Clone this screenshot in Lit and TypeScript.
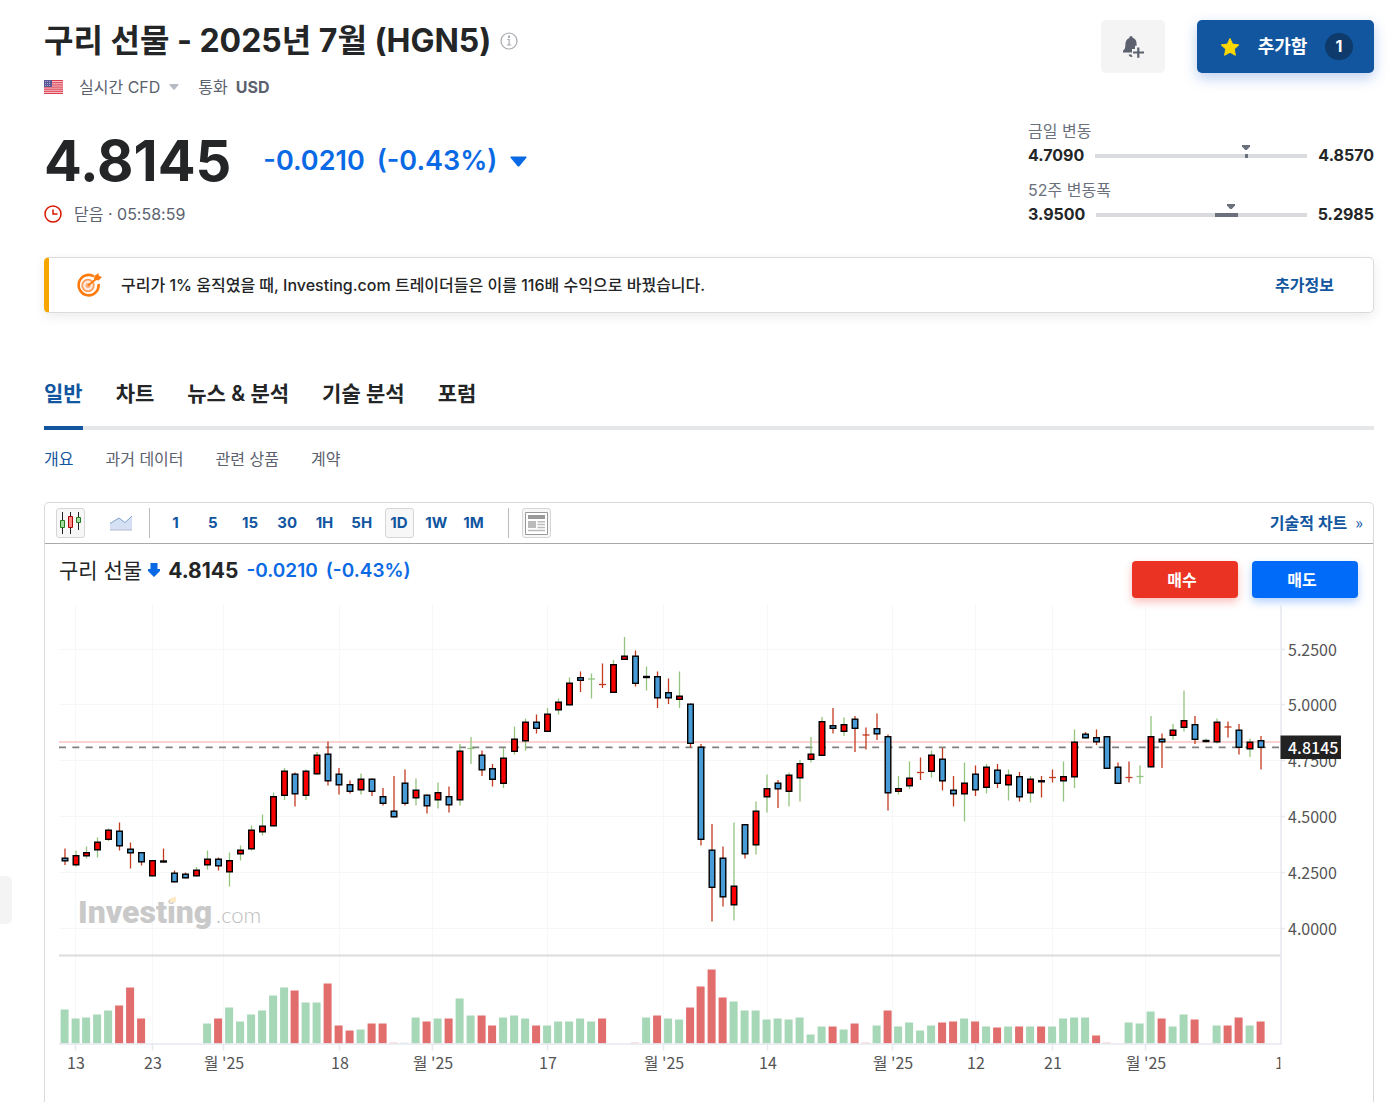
import { LitElement, html, svg, css } from "lit";
import { customElement, state } from "lit/decorators.js";

type Kind = "u" | "d" | "ku" | "kd" | "cu" | "cd";
// kind, high, body top, body bottom, low (plot coordinates)
// u = rising, d = falling, k* = flat black body, c* = cross
const CANDLES: [Kind, number, number, number, number][] = [
  ["d", 848.5, 857.5, 861.5, 865], ["u", 850.5, 855, 865.5, 866.5], ["u", 846.5, 852, 856.5, 858.5],
  ["u", 837.5, 841.5, 850.5, 857.5], ["u", 828.5, 829.5, 840, 841], ["d", 822.5, 830.5, 846.5, 850.5],
  ["d", 842.5, 848.5, 853.5, 868.5], ["d", 852, 852, 862.5, 865.5], ["u", 860, 860, 876.5, 876.5],
  ["kd", 848.5, 860.5, 862.5, 862.5], ["d", 870.5, 872.5, 882.5, 882.5], ["d", 872.5, 873.5, 878.5, 878.5],
  ["u", 867, 869.5, 876.5, 876.5], ["u", 850.5, 858.5, 865.5, 869.5], ["d", 857.5, 858.5, 866.5, 870.5],
  ["u", 852.5, 860, 872.5, 886.5], ["u", 845.5, 849.5, 854.5, 860.5], ["u", 825.5, 829.5, 849.5, 850.5],
  ["u", 814.5, 825.5, 832.5, 835.5], ["u", 792.5, 796, 826.5, 826.5], ["u", 768, 770.5, 796, 800],
  ["d", 772.5, 773.5, 794.5, 806.5], ["u", 769.5, 770.5, 796, 800], ["u", 752, 754.5, 774.5, 774.5],
  ["d", 741.5, 753.5, 781.5, 785.5], ["d", 768, 773.5, 785.5, 794.5], ["d", 780.5, 784, 792, 793.5],
  ["u", 773.5, 778.5, 790.5, 794.5], ["d", 778.5, 778.5, 792, 796], ["d", 788, 796, 804, 805.5],
  ["d", 776, 810.5, 817.5, 817.5], ["d", 769.5, 782.5, 804, 805.5], ["u", 778.5, 789.5, 798.5, 805.5],
  ["d", 794.5, 794.5, 806.5, 813.5], ["u", 782.5, 792, 800.5, 808.5], ["d", 786.5, 796, 805.5, 812.5],
  ["u", 744, 750.5, 800.5, 805.5], ["cu", 737, 748.5, 748.5, 764], ["d", 750.5, 754.5, 770.5, 776],
  ["d", 764, 768, 780, 786.5], ["u", 748, 757.5, 784, 788], ["u", 726.5, 738.5, 752, 754.5],
  ["u", 718.5, 721.5, 741.5, 750.5], ["d", 714.5, 721.5, 729, 733.5], ["u", 708, 713.5, 732, 732],
  ["u", 698.5, 701.5, 710.5, 714.5], ["u", 677.5, 682.5, 705.5, 705.5], ["d", 671.5, 677, 681, 692],
  ["cu", 673.5, 679, 679, 698.5], ["cd", 663.5, 684.5, 684.5, 688], ["u", 660, 664, 693, 693],
  ["u", 637, 655.5, 660, 660], ["d", 650.5, 655.5, 684, 686.5], ["ku", 666.5, 676, 678, 690.5],
  ["d", 671.5, 676, 698.5, 708], ["d", 678.5, 692, 698.5, 704], ["u", 671.5, 695.5, 700, 708],
  ["d", 703.5, 703.5, 744, 747.5], ["d", 744, 746.5, 840, 845.5], ["d", 824, 849.5, 888, 921.5],
  ["d", 846.5, 857.5, 897.5, 906.5], ["u", 822.5, 885.5, 905.5, 920.5], ["d", 824, 824, 854.5, 858.5],
  ["u", 801.5, 810.5, 845.5, 854.5], ["u", 774.5, 788, 797.5, 812.5], ["d", 780, 782.5, 789.5, 808],
  ["u", 772.5, 774.5, 792, 806.5], ["u", 760, 763, 778.5, 801.5], ["u", 737, 753.5, 760, 762.5],
  ["u", 717, 721, 756, 756], ["d", 708, 725, 729, 733.5], ["u", 717.5, 724, 732, 736],
  ["d", 716, 718.5, 729, 752], ["cd", 727.5, 735, 735, 749.5], ["d", 713.5, 728, 734.5, 740],
  ["d", 734.5, 736, 793.5, 810.5], ["u", 776, 788, 792, 794.5], ["u", 761.5, 777.5, 786.5, 789],
  ["cd", 757.5, 772.5, 772.5, 780], ["u", 750.5, 754.5, 772, 777.5], ["d", 748, 758.5, 781.5, 790.5],
  ["d", 776, 789.5, 794.5, 806.5], ["u", 762.5, 782.5, 794.5, 821.5], ["d", 765.5, 773.5, 790.5, 796],
  ["u", 764, 766.5, 788, 793.5], ["d", 764, 769.5, 784, 788], ["u", 769.5, 774.5, 785.5, 800.5],
  ["d", 772, 776, 797.5, 801.5], ["u", 776, 778.5, 793.5, 802.5], ["kd", 776, 780, 782.5, 797.5],
  ["cd", 769.5, 777.5, 777.5, 782.5], ["u", 761.5, 776, 781.5, 801.5], ["u", 729.5, 741.5, 777.5, 788],
  ["d", 732, 733.5, 738.5, 738.5], ["d", 729.5, 737, 742.5, 745], ["d", 736, 736, 769, 769],
  ["d", 762.5, 766.5, 784, 784], ["cd", 761.5, 777.5, 777.5, 782.5], ["cu", 765.5, 776.5, 776.5, 784],
  ["u", 716, 736, 767.5, 767.5], ["d", 733.5, 738.5, 742.5, 768], ["u", 724, 729.5, 736, 739.5],
  ["u", 690.5, 720, 728, 731.5], ["d", 716, 724, 740, 744], ["ku", 738.5, 739.5, 742.5, 742.5],
  ["u", 718.5, 721.5, 742.5, 743.5], ["cd", 721.5, 727, 727, 737.5], ["d", 724, 729.5, 748, 754.5],
  ["u", 738.5, 741.5, 749.5, 757], ["d", 736, 740, 748, 769.5],
];

// Positive = buying volume, negative = selling volume, 0 = none
const VOLUMES: number[] = [
  34, 25, 26, 29, 33, -38, -56, -25, 0, 0, 0, 0, 0, 20, -25, 36, 22, 29, 33, 48, 56, -53, 41, 41, -60,
  -18, -13, 14, -20, -20, -1, 1, 26, -22, 25, -25, 45, 28, -28, -18, 26, 28, 25, -18, 18, 22, 22, 25, 22, -25,
  0, 0, -1, 26, -28, 25, 24, -36, -57, -74, -46, 42, 33, 33, 24, 25, 24, 26, 9, 17, -17, 14, -20, -1, 18,
  -33, 17, 21, 13, 18, -21, -22, 25, -22, 17, -16, 17, -17, 17, -17, 17, 25, 26, 26, -8, -1, 0, 21, 20, 32,
  -25, 17, 29, -24, 0, 18, -18, -26, 18, -22,
];

const X_LABELS: [number, string][] = [
  [76, "13"], [153, "23"], [224, "월 '25"], [340, "18"], [433, "월 '25"], [548, "17"],
  [664, "월 '25"], [768, "14"], [893, "월 '25"], [976, "12"], [1053, "21"], [1146, "월 '25"],
];
const Y_LABELS: [number, string][] = [
  [650, "5.2500"], [705, "5.0000"], [761, "4.7500"], [817, "4.5000"], [873, "4.2500"], [929, "4.0000"],
];
const slotX = (i: number) => Math.round((64.8 + i * 10.973) * 2) / 2;

@customElement("price-chart")
export class PriceChart extends LitElement {
  static styles = css`
    :host { display: block; }
    .plot { display: block; width: 100%; height: auto; }
    .axis { font: 16px "Noto Sans CJK KR", "Noto Sans", sans-serif; fill: #555; }
    .tag { font: 500 16px "Noto Sans CJK KR", "Noto Sans", sans-serif; fill: #fff; }
    .brand { font: 900 32px Roboto, sans-serif; fill: #c9c9c9; }
    .brand-tld { font: 300 22px Lato, sans-serif; fill: #bdbdbd; }
    .crisp { shape-rendering: crispEdges; }
  `;

  private candle([kind, high, top, bottom, low]: [Kind, number, number, number, number], i: number) {
    const x = slotX(i);
    const rising = kind.endsWith("u");
    const wick = rising ? "#93c47d" : "#c23b1e";
    const wickLine = svg`<path d="M${x} ${high}V${low}" stroke=${wick} stroke-width="1.3"/>`;
    if (kind[0] === "c") return svg`${wickLine}<path d="M${x - 3.5} ${top}h7" stroke=${wick} stroke-width="1.3"/>`;
    if (kind[0] === "k") return svg`${wickLine}<path d="M${x - 3.5} ${(top + bottom) / 2}h7" stroke="#000" stroke-width="2.4"/>`;
    return svg`${wickLine}<rect x=${x - 2.8} y=${top + 0.7} width="5.6" height=${bottom - top - 1.4}
      fill=${rising ? "#f90000" : "#479bd6"} stroke="#000" stroke-width="1.4"/>`;
  }

  render() {
    return html`<svg class="plot" viewBox="45 604 1328 498" role="img" aria-label="구리 선물">
      <g class="crisp" stroke="#f6f7f8">
        ${X_LABELS.map(([x]) => svg`<path d="M${x - 0.5} 605V1044"/>`)}
        ${Y_LABELS.map(([y]) => svg`<path d="M59 ${y - 0.5}H1280"/>`)}
      </g>
      <text class="brand" x="78" y="923">Investing</text>
      <path d="M170 898.500l6-2v5.500l-6 1z" fill="#fdebc8"/>
      <text class="brand-tld" x="216" y="923">.com</text>
      <path d="M59 742H1281" stroke="#fbc4c4" stroke-width="1.6"/>
      <path d="M59 747.3H1281" stroke="#808080" stroke-width="1.8" stroke-dasharray="7 6.33"/>
      ${CANDLES.map((c, i) => this.candle(c, i))}
      ${VOLUMES.map((v, i) => v === 0 ? null : svg`<rect x=${slotX(i) - 4.4} y=${1043.5 - Math.abs(v)} width="8"
        height=${Math.abs(v)} fill=${v > 0 ? "#a6d7b6" : "#e26d6d"} fill-opacity=${Math.abs(v) === 1 ? 0.4 : 1}/>`)}
      <path d="M59 955.5H1281" stroke="#dcdcdc" stroke-width="2"/>
      <g stroke="#e6e9ef" stroke-width="1.6" fill="none">
        <path d="M59 1044H1281V605"/>
        ${X_LABELS.map(([x]) => svg`<path d="M${x - 0.5} 1044v6.5"/>`)}
        ${Y_LABELS.map(([y]) => svg`<path d="M1281 ${y - 0.5}h4"/>`)}
      </g>
      ${X_LABELS.map(([x, t]) => svg`<text class="axis" x=${x} y="1069" text-anchor="middle">${t}</text>`)}
      ${Y_LABELS.map(([y, t]) => svg`<text class="axis" x="1288" y=${y + 6}>${t}</text>`)}
      <clipPath id="edge"><rect x="1270" y="1050" width="10.5" height="30"/></clipPath>
      <text class="axis" x="1275" y="1069" clip-path="url(#edge)">1</text>
      <rect x="1280.5" y="735.5" width="60.5" height="23.5" fill="#222"/>
      <text class="tag" x="1288" y="754">4.8145</text>
    </svg>`;
  }
}

@customElement("day-range")
export class DayRange extends LitElement {
  static properties = {
    label: {}, low: {}, high: {},
    from: { type: Number }, to: { type: Number }, at: { type: Number },
  };
  declare label: string;
  declare low: string;
  declare high: string;
  declare from: number;
  declare to: number;
  declare at: number;

  static styles = css`
    :host { display: block; }
    .label { font-size: 16px; line-height: 22px; color: #6a707c; }
    .line { display: flex; align-items: center; gap: 11px; padding-top: 1px; font-size: 16px; font-weight: 700; line-height: 24px; color: #232526; }
    .track { position: relative; flex: 1; height: 4px; margin-top: 2px; background: #d9dbdf; }
    .span { position: absolute; top: 0; height: 4px; background: #6a707c; }
    .mark { position: absolute; bottom: 8px; width: 8px; height: 5px; transform: translateX(-50%); fill: #6a707c; }
  `;

  render() {
    return html`<div class="label">${this.label}</div>
      <div class="line">
        <span>${this.low}</span>
        <div class="track">
          <div class="span" style="left:${this.from}%;width:${this.to - this.from}%"></div>
          <svg class="mark" style="left:${this.at}%" viewBox="0 0 8 5"><path d="M0 0h8v1.5L4.8 5H3.2L0 1.5z"/></svg>
        </div>
        <span>${this.high}</span>
      </div>`;
  }
}

@customElement("app-root")
export class AppRoot extends LitElement {
  @state() private interval = "1D";

  static styles = css`
    :host {
      display: block; position: relative; box-sizing: border-box; padding: 20px 23px 0 44px;
      overflow: hidden; background: #fff; color: #232526;
      font-family: Inter, "Noto Sans CJK KR", sans-serif;
    }
    button { font-family: inherit; border: 0; padding: 0; cursor: pointer; }
    a { color: inherit; text-decoration: none; }
    svg { display: block; flex: none; }

    .top { display: flex; justify-content: space-between; align-items: flex-start; }
    .title { display: flex; align-items: center; gap: 9px; }
    h1 { margin: 0; font-size: 32px; font-weight: 700; line-height: 42px; }
    .meta { display: flex; align-items: center; margin-top: 13px; font-size: 16px; line-height: 24px; color: #5b616e; }
    .market { display: flex; align-items: center; gap: 9px; margin: 0 19px 0 16px; background: none; color: inherit; font-size: 16px; line-height: 24px; }
    .meta strong { margin-left: 8px; font-weight: 700; }
    .quote { display: flex; align-items: center; margin-top: 32px; line-height: 60px; }
    .last { font-size: 56px; font-weight: 700; }
    .change { display: flex; gap: 12px; margin-left: 32px; font-size: 27px; font-weight: 600; color: #0a69e5; }
    .fall { margin-left: 13px; }
    .status { display: flex; align-items: center; gap: 12px; margin-top: 11px; font-size: 16px; line-height: 24px; color: #5b616e; }

    .side { display: flex; flex-direction: column; width: 346px; }
    .actions { display: flex; justify-content: flex-end; gap: 32px; margin-bottom: 47px; }
    .bell { display: grid; place-items: center; width: 64px; height: 53px; border-radius: 5px; background: #f4f4f5; }
    .added { display: flex; align-items: center; width: 177px; height: 53px; padding: 0 21px 0 23px; box-sizing: border-box; border-radius: 5px;
      background: #1256a0; color: #fff; font-size: 18px; font-weight: 700; box-shadow: 0 5px 14px rgba(18, 86, 200, .28); }
    .added-text { margin: 0 auto; padding-bottom: 4px; }
    .count { display: grid; place-items: center; width: 28px; height: 27px; border-radius: 14px; background: #0f3a6c; font-size: 16px; line-height: 27px; }
    .ranges { display: grid; gap: 12px; }

    .promo { display: flex; align-items: center; height: 56px; margin-top: 31px; padding: 0 39px 0 27px; box-sizing: border-box; border: 1px solid #d9dcdf;
      border-left: 5px solid #f7a600; border-radius: 5px; box-shadow: 0 4px 12px rgba(0, 0, 0, .08); font-size: 16px; font-weight: 600; }
    .promo p { flex: 1; margin: 0 0 0 19px; padding-bottom: 3px; font-weight: 500; }
    .promo a { padding-bottom: 2px; color: #1256a0; }

    .tabs { display: flex; gap: 33px; margin-top: 63px; border-bottom: 4px solid #e6e7e9; font-size: 21px; font-weight: 600; line-height: 36px; }
    .tabs a { height: 50px; border-bottom: 4px solid transparent; margin-bottom: -4px; }
    .tabs a.on { color: #1256a0; border-color: #1256a0; }
    .subtabs { display: flex; gap: 32px; margin-top: 17px; font-size: 16px; line-height: 24px; color: #5b616e; }
    .subtabs .on { color: #1256a0; }

    .card { margin-top: 31px; border: 1px solid #d9d9d9; border-bottom: 0; border-radius: 5px 5px 0 0; }
    .bar { display: flex; align-items: center; height: 40px; padding: 0 10px 0 11px; border-bottom: 1px solid #aaa; color: #1256a0; font-size: 16px; font-weight: 600; }
    .tool { display: grid; place-items: center; width: 29px; height: 30px; box-sizing: border-box; border: 1px solid transparent; border-radius: 3px; background: none; }
    .area { margin-left: 21px; }
    .tool.on { border-color: #d6d6d6; background: #f7f7f7; }
    .rule { width: 1px; height: 30px; background: #bbb; }
    .area + .rule { margin-left: 14px; }
    .news { margin-left: 13px; }
    .steps { display: flex; justify-content: space-between; width: 327px; margin: 0 20px 0 11px; }
    .step { padding-bottom: 2px; color: #1256a0; font-size: 15px; font-weight: 700; }
    .tech { display: flex; gap: 8px; margin-left: auto; padding-bottom: 3px; }
    .tech span { font-family: "Noto Sans CJK KR", sans-serif; font-weight: 400; }

    .head { display: flex; justify-content: space-between; height: 60px; padding: 0 15px 0 14px; }
    .name { display: flex; align-items: center; height: 52px; font-size: 21px; }
    .name span:first-child { padding-bottom: 2px; }
    .name svg { margin: 0 8px 0 6px; }
    .name b { font-weight: 700; }
    .name .delta { margin-left: 8px; font-size: 19px; font-weight: 600; color: #0a69e5; }
    .trade { display: flex; gap: 14px; padding-top: 17px; }
    .trade button { width: 106px; height: 37px; padding: 0 6px 2px 0; border-radius: 4px; color: #fff; font-size: 16px; font-weight: 700; }
    .buy { background: #ea3323; box-shadow: 0 4px 9px rgba(234, 51, 35, .3); }
    .sell { background: #006af9; box-shadow: 0 4px 9px rgba(0, 106, 249, .3); }
    .handle { position: absolute; left: 0; top: 876px; width: 12px; height: 48px; border-radius: 0 5px 5px 0; background: #f4f4f4; }
  `;

  render() {
    return html`
      <header class="top">
        <div>
          <div class="title">
            <h1>구리 선물 - 2025년 7월 (HGN5)</h1>
            <svg width="18" height="18" viewBox="0 0 18 18" fill="none" stroke="#a5a8ad" stroke-width="1.2"><circle cx="9" cy="9" r="8"/><path d="M7.3 7.5h1.8V13M7 13h4.2"/><circle cx="9" cy="4.8" r=".6" fill="#a5a8ad"/></svg>
          </div>
          <div class="meta">
            <svg width="19" height="14" viewBox="0 0 19 14"><path fill="#f5bcc2" d="M0 0h19v14H0z"/><path stroke="#dc3f52" d="M0 .5h19M0 2.7h19M0 4.9h19M0 7.1h19M0 9.2h19M0 11.3h19M0 13.5h19"/><path fill="#5a5797" d="M0 0h8v7H0z"/><path stroke="#a9a7cf" stroke-dasharray="1 1" d="M1 1.5h6M1 3.5h6M1 5.5h6"/></svg>
            <button class="market">실시간 CFD <svg width="10" height="6" viewBox="0 0 10 6"><path fill="#b5bac4" d="M1 0h8q1 0 .5 1L5.7 5.5Q5 6.2 4.3 5.5L.5 1Q0 0 1 0z"/></svg></button>
            <span>통화</span><strong>USD</strong>
          </div>
          <div class="quote">
            <span class="last">4.8145</span>
            <span class="change"><span>-0.0210</span><span>(-0.43%)</span></span>
            <svg class="fall" width="17" height="11" viewBox="0 0 17 11"><path fill="#0a69e5" d="M1 .5h15q1 .3.4 1.200L9.600 10Q8.500 11 7.400 10L.6 1.700Q0 .8 1 .5z"/></svg>
          </div>
          <div class="status">
            <svg width="18" height="18" viewBox="0 0 18 18" fill="none" stroke="#d91400" stroke-width="1.5"><circle cx="9" cy="9" r="8"/><path d="M9 4.500v4.500h4.500"/></svg>
            <span>닫음 · 05:58:59</span>
          </div>
        </div>
        <div class="side">
          <div class="actions">
            <button class="bell" aria-label="알림"><svg width="22" height="22" viewBox="0 0 22 22" fill="#5b616e"><path d="M9 0q1.700 0 1.700 1.800C13.500 2.600 14.600 5 14.600 7.800v2h-1.600V13H10v3.500H1v-1.800C2.600 13.500 3.400 12.500 3.400 8c0-2.600 1.200-4.800 3.900-6Q7.300 0 9 0zM6.500 18.500H9.500l1 2.500Q7.500 21.500 6.500 18.500zM15.200 11.500h2.200v3.900H22v2.200h-4.600v4.200h-2.200v-4.200H11v-2.200h4.200z"/></svg></button>
            <button class="added">
              <svg width="20" height="20" viewBox="0 0 20 20"><path fill="#ffd800" stroke="#ffd800" stroke-linejoin="round" d="M10 1.500l2.600 5.600 6.200.8-4.500 4.200 1.100 6.200-5.400-3-5.400 3 1.100-6.200L1.200 7.900l6.200-.8z"/></svg>
              <span class="added-text">추가함</span><span class="count">1</span>
            </button>
          </div>
          <div class="ranges">
            <day-range label="금일 변동" low="4.7090" high="4.8570" from="70.6" to="72" at="71"></day-range>
            <day-range label="52주 변동폭" low="3.9500" high="5.2985" from="56.5" to="67.5" at="64"></day-range>
          </div>
        </div>
      </header>

      <section class="promo">
        <svg width="26" height="24" viewBox="0 0 26 24" fill="none"><path stroke="#ff7a0a" stroke-width="2.6" d="M18 3.500A10 10.200 0 1 0 22.600 11"/><circle cx="12" cy="12.5" r="5.8" fill="#ffe9dc" stroke="#ff9a55" stroke-width="1.8"/><circle cx="12" cy="12.5" r="2.5" fill="#ffab78"/><path stroke="#ff7a0a" stroke-width="1.8" d="M12 12.500L22 4.500"/><path fill="#ff7a0a" d="M18 6.500l.5-3.500 4-3 .3 2.800 3.200 1.200-3.500 3.500z"/></svg>
        <p>구리가 1% 움직였을 때, Investing.com 트레이더들은 이를 116배 수익으로 바꿨습니다.</p>
        <a href="#more">추가정보</a>
      </section>

      <nav class="tabs">
        <a class="on" href="#general">일반</a><a href="#chart">차트</a><a href="#news">뉴스 &amp; 분석</a><a href="#technical">기술 분석</a><a href="#forum">포럼</a>
      </nav>
      <nav class="subtabs">
        <a class="on" href="#overview">개요</a><a href="#history">과거 데이터</a><a href="#related">관련 상품</a><a href="#contracts">계약</a>
      </nav>

      <section class="card">
        <div class="bar">
          <button class="tool on" aria-label="캔들"><svg width="23" height="24" viewBox="0 0 23 24"><path stroke="#222" d="M3.500 1v22M11.500 1v22M19.500 1v18"/><path fill="#a6dba0" stroke="#217a21" d="M1.500 9.500h4v7h-4zM17.500 6.500h4v5h-4z"/><path fill="#ff8a8a" stroke="#a80000" d="M9.500 5.500h4v11h-4z"/></svg></button>
          <button class="tool area" aria-label="영역"><svg width="24" height="16" viewBox="0 0 24 16"><path fill="#d6e0f4" d="M1 8.500L10 3l6 4.500 7-6.500v14H1z"/><path fill="none" stroke="#7f9fce" d="M1 8.500L10 3l6 4.500 7-6.500"/><path stroke="#b4bccb" d="M1 15h22"/></svg></button>
          <span class="rule"></span>
          <div class="steps">
            ${["1", "5", "15", "30", "1H", "5H", "1D", "1W", "1M"].map((s) => html`<button
              class="tool step ${s === this.interval ? "on" : ""}" @click=${() => (this.interval = s)}>${s}</button>`)}
          </div>
          <span class="rule"></span>
          <button class="tool on news" aria-label="뉴스"><svg width="23" height="23" viewBox="0 0 23 23"><path fill="#fff" stroke="#999" d="M.5.5h22v22H.5z"/><path fill="#999" d="M3 3h17v4H3z"/><path fill="#bbb" d="M3 9h8v7H3z"/><path stroke="#bbb" stroke-width="1.5" d="M12.500 9.800H20M12.500 12.600H20M12.500 15.400H20M3 18.500h17"/></svg></button>
          <a class="tech" href="#tech">기술적 차트 <span>»</span></a>
        </div>
        <div class="head">
          <div class="name">
            <span>구리 선물</span>
            <svg width="12" height="14" viewBox="0 0 12 14"><path fill="#0a69e5" d="M2.500 0h7v6H12v2L6 14 0 8V6h2.500z"/></svg>
            <b>4.8145</b><span class="delta">-0.0210</span><span class="delta">(-0.43%)</span>
          </div>
          <div class="trade"><button class="buy">매수</button><button class="sell">매도</button></div>
        </div>
        <price-chart></price-chart>
      </section>
      <div class="handle"></div>
    `;
  }
}
